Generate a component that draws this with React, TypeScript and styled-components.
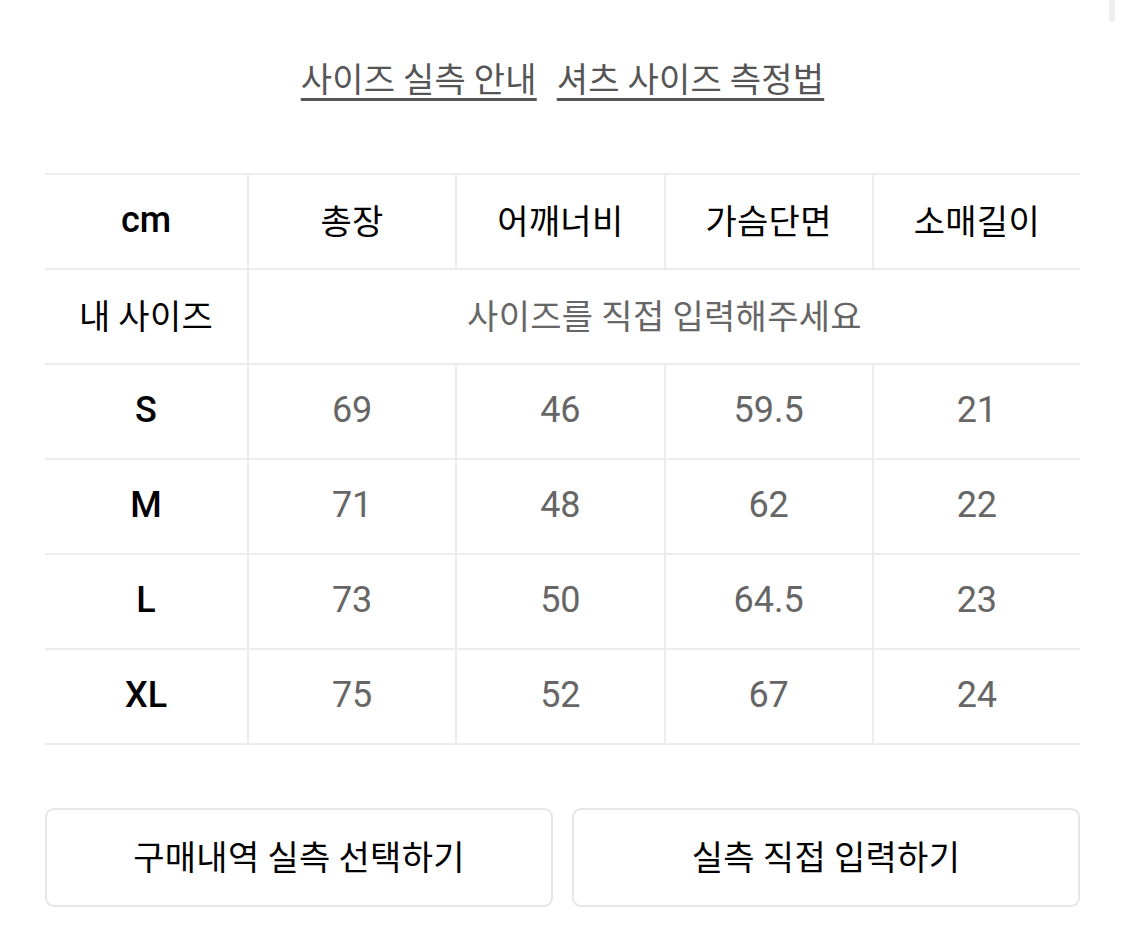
import React from "react";
import styled, { createGlobalStyle } from "styled-components";

const Global = createGlobalStyle`
  html, body { margin: 0; padding: 0; background: #fff; }
  body { font-family: Roboto, "Noto Sans CJK KR", sans-serif; -webkit-font-smoothing: antialiased; }
`;

const Page = styled.div`
  position: relative;
  width: 1125px;
  height: 943px;
  box-sizing: border-box;
  padding: 55px 45px 0 45px;
  overflow: hidden;
`;

const ScrollThumb = styled.div`
  position: absolute;
  top: 0;
  right: 10px;
  width: 6px;
  height: 22px;
  border-radius: 0 0 3px 3px;
  background: #f0f0f0;
`;

const LinkRow = styled.div`
  display: flex;
  justify-content: center;
  gap: 20px;
  height: 46px;
`;

const GuideLink = styled.a`
  font-family: "Noto Sans CJK KR", sans-serif;
  font-size: 34px;
  letter-spacing: 0.2px;
  line-height: 46px;
  color: #555;
  text-decoration: underline;
  text-decoration-thickness: 2.5px;
  text-underline-offset: 6px;
  text-decoration-color: #555;
  cursor: pointer;
`;

const Table = styled.div`
  margin-top: 72px;
  display: grid;
  grid-template-columns: 202px repeat(4, 1fr);
  border-top: 2.5px solid #ececec;
`;

type Tone = "head" | "value" | "muted";

const Cell = styled.div<{ $first?: boolean; $span?: boolean; $tone: Tone; $latin?: boolean }>`
  height: 95px;
  box-sizing: border-box;
  display: flex;
  align-items: center;
  justify-content: center;
  border-bottom: 2.5px solid #ececec;
  border-left: ${(p) => (p.$first ? "none" : "2.5px solid #ececec")};
  grid-column: ${(p) => (p.$span ? "2 / span 4" : "auto")};
  font-family: ${(p) => (p.$latin ? "Roboto, sans-serif" : '"Noto Sans CJK KR", sans-serif')};
  font-size: ${(p) => (p.$latin ? "36px" : "34px")};
  letter-spacing: ${(p) => (p.$latin ? "0" : "0.3px")};
  font-weight: ${(p) => (p.$latin && p.$tone === "head" ? 500 : 400)};
  color: ${(p) => (p.$tone === "head" ? "#000" : "#666")};
  padding-bottom: 4px;
`;

const ButtonRow = styled.div`
  margin-top: 63px;
  display: grid;
  grid-template-columns: 1fr 1fr;
  gap: 19px;
`;

const ActionButton = styled.button`
  height: 99px;
  box-sizing: border-box;
  border: 2px solid #e6e6e6;
  border-radius: 9px;
  background: #fff;
  font-family: "Noto Sans CJK KR", sans-serif;
  font-size: 34px;
  letter-spacing: 0.3px;
  font-weight: 400;
  color: #000;
  cursor: pointer;
  padding: 0 0 4px 0;
`;

const headers = ["총장", "어깨너비", "가슴단면", "소매길이"];
const rows: [string, string[]][] = [
  ["S", ["69", "46", "59.5", "21"]],
  ["M", ["71", "48", "62", "22"]],
  ["L", ["73", "50", "64.5", "23"]],
  ["XL", ["75", "52", "67", "24"]],
];

export default function App() {
  return (
    <Page>
      <Global />
      <ScrollThumb />
      <LinkRow>
        <GuideLink>사이즈 실측 안내</GuideLink>
        <GuideLink>셔츠 사이즈 측정법</GuideLink>
      </LinkRow>
      <Table>
        <Cell $first $latin $tone="head">cm</Cell>
        {headers.map((h) => (
          <Cell key={h} $tone="head">{h}</Cell>
        ))}
        <Cell $first $tone="head">내 사이즈</Cell>
        <Cell $span $tone="muted">사이즈를 직접 입력해주세요</Cell>
        {rows.map(([size, vals]) => (
          <React.Fragment key={size}>
            <Cell $first $latin $tone="head">{size}</Cell>
            {vals.map((v, i) => (
              <Cell key={i} $latin $tone="value">{v}</Cell>
            ))}
          </React.Fragment>
        ))}
      </Table>
      <ButtonRow>
        <ActionButton>구매내역 실측 선택하기</ActionButton>
        <ActionButton>실측 직접 입력하기</ActionButton>
      </ButtonRow>
    </Page>
  );
}
